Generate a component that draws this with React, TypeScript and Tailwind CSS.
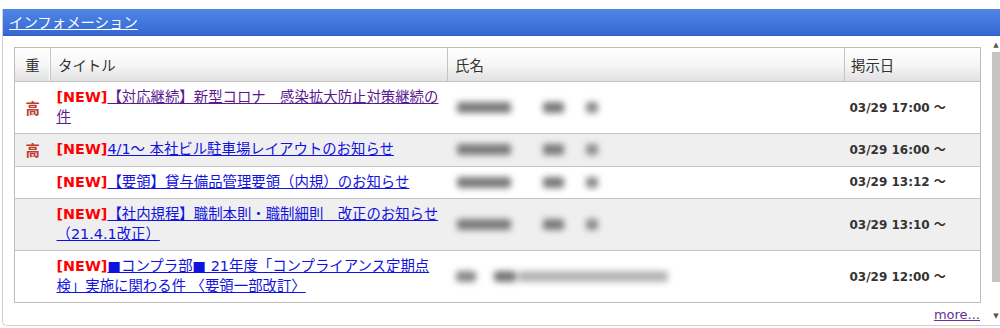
import React from 'react';

type Row = {
  hi: boolean;
  title: React.ReactNode;
  visited?: boolean;
  date: string;
  blobs: [number, number, string][];
};

const normalBlobs: [number, number, string][] = [
  [9, 54, 'bg-[#7a7a7a]'],
  [32, 21, 'bg-[#7a7a7a]'],
  [22, 12, 'bg-[#8a8a8a]'],
];

const rows: Row[] = [
  {
    hi: true,
    visited: true,
    title: '【対応継続】新型コロナ　感染拡大防止対策継続の件',
    date: '03/29 17:00 ～',
    blobs: normalBlobs,
  },
  {
    hi: true,
    title: '4/1～ 本社ビル駐車場レイアウトのお知らせ',
    date: '03/29 16:00 ～',
    blobs: normalBlobs,
  },
  {
    hi: false,
    title: '【要領】貸与備品管理要領（内規）のお知らせ',
    date: '03/29 13:12 ～',
    blobs: normalBlobs,
  },
  {
    hi: false,
    title: '【社内規程】職制本則・職制細則　改正のお知らせ（21.4.1改正）',
    date: '03/29 13:10 ～',
    blobs: normalBlobs,
  },
  {
    hi: false,
    title: '■コンプラ部■ 21年度「コンプライアンス定期点検」実施に関わる件 〈要領一部改訂〉',
    date: '03/29 12:00 ～',
    blobs: [
      [8, 20, 'bg-[#8a8a8a]'],
      [18, 22, 'bg-[#777]'],
      [2, 150, 'bg-[#b4b4b4]'],
    ],
  },
];

export default function App() {
  return (
    <div className="w-[1000px] h-[328px] overflow-hidden bg-white pt-[9px] font-['DejaVu_Sans','Noto_Sans_CJK_JP',sans-serif] text-[#333]">
      <div className="ml-[2px] w-[1000px] border-l border-b border-[#cfcfcf] rounded-bl-[5px]">
        {/* header bar */}
        <div className="h-[27px] flex items-center px-[6px] bg-gradient-to-b from-[#4f86e6] to-[#3568d2] border-b border-[#2d5fc4]">
          <a className="text-white underline text-[14.4px] leading-none font-['Noto_Sans_CJK_JP',sans-serif]">
            インフォメーション
          </a>
        </div>

        {/* body */}
        <div className="h-[289px] flex">
          <div className="w-[988px] pl-[11px] pt-[11px]">
            <table className="w-[966px] table-fixed border-collapse border border-[#bdbdbd]">
              <colgroup>
                <col className="w-[36px]" />
                <col className="w-[397px]" />
                <col className="w-[397px]" />
                <col className="w-[136px]" />
              </colgroup>
              <thead>
                <tr className="h-[34px] bg-gradient-to-b from-[#ffffff] via-[#f6f6f6] to-[#e0e0e0] text-[14.4px] font-['Noto_Sans_CJK_JP',sans-serif] text-[#333]">
                  <th className="font-normal text-center border-r border-[#c4c4c4] shadow-[inset_-1px_0_0_#fff]">重</th>
                  <th className="font-normal text-left pl-[7px] border-r border-[#c4c4c4]">タイトル</th>
                  <th className="font-normal text-left pl-[7px] border-r border-[#c4c4c4]">氏名</th>
                  <th className="font-normal text-left pl-[6px]">掲示日</th>
                </tr>
              </thead>
              <tbody>
                {rows.map((r, i) => (
                  <tr
                    key={i}
                    className={`border-t border-[#c4c4c4] ${i % 2 === 1 ? 'bg-[#efefef]' : 'bg-white'}`}
                  >
                    <td className="text-center align-middle text-[14.4px] font-bold text-[#bf3b2c] font-['Noto_Sans_CJK_JP',sans-serif]">
                      {r.hi ? '高' : ''}
                    </td>
                    <td className="py-[6px] pl-[6px] pr-[4px] text-[14.4px] leading-[19.5px] align-middle">
                      <span className="font-bold text-[#f00]">[NEW]</span>
                      <a
                        className={`underline ${r.visited ? 'text-[#5a1a8e]' : 'text-[#1212e0]'}`}
                      >
                        {r.title}
                      </a>
                    </td>
                    <td className="align-middle">
                      <div className="flex items-center h-[19px] blur-[3px]">
                        {r.blobs.map(([ml, w, c], j) => (
                          <span
                            key={j}
                            className={`h-[11px] rounded-[3px] shrink-0 ${c}`}
                            style={{ marginLeft: ml, width: w }}
                          />
                        ))}
                      </div>
                    </td>
                    <td className="pl-[5px] align-middle text-[12px] font-bold text-[#333] whitespace-nowrap">
                      {r.date}
                    </td>
                  </tr>
                ))}
              </tbody>
            </table>
            <div className="flex justify-end w-[966px] pt-[4px]">
              <a className="text-[13px] leading-[16px] underline text-[#6a2f9a]">more...</a>
            </div>
          </div>

          {/* scrollbar */}
          <div className="w-[10px] mt-[4px] mb-[4px] flex flex-col items-center">
            <span className="text-[7px] leading-[10px] text-[#555]">▲</span>
            <div className="mt-[2px] w-[9px] h-[230px] bg-[#c5c5c5]" />
            <div className="flex-1" />
            <span className="text-[7px] leading-[10px] text-[#555]">▼</span>
          </div>
        </div>
      </div>
    </div>
  );
}
